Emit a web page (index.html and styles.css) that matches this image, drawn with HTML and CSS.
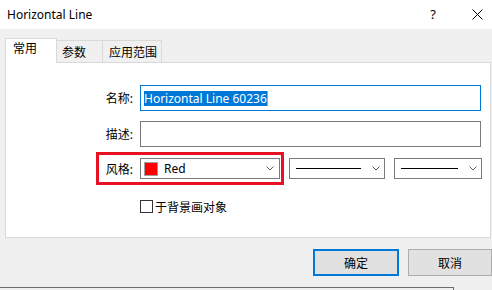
FILE: index.html
```html
<!DOCTYPE html>
<html>
<head>
  <meta charset="UTF-8">
  <title>Horizontal Line</title>
  <link rel="stylesheet" href="styles.css">
</head>
<body>
  <div class="dialog">
    <div class="titlebar">
      <span class="title">Horizontal Line</span>
      <span class="help">?</span>
      <svg class="close" width="11" height="11" viewBox="0 0 11 11">
        <path d="M0.5 0.5 L10.5 10.5 M10.5 0.5 L0.5 10.5" stroke="#000" stroke-width="1" fill="none"/>
      </svg>
    </div>

    <div class="tabs">
      <div class="tab active">常用</div>
      <div class="tab tab-params">参数</div>
      <div class="tab tab-scope">应用范围</div>
    </div>

    <div class="panel">
      <div class="row row-name">
        <label class="label">名称:</label>
        <div class="input focused"><span class="selected">Horizontal Line 60236</span></div>
      </div>
      <div class="row row-desc">
        <label class="label">描述:</label>
        <div class="input"></div>
      </div>
      <div class="row row-style">
        <div class="mark"></div>
        <label class="label">风格:</label>
        <div class="combo combo-color">
          <span class="swatch"></span>
          <span class="combo-text">Red</span>
          <svg class="chevron" width="8" height="5" viewBox="0 0 8 5"><path d="M0.5 0.5 L4 4 L7.5 0.5" stroke="#606060" fill="none"/></svg>
        </div>
        <div class="combo combo-line combo-line1">
          <span class="line"></span>
          <svg class="chevron" width="8" height="5" viewBox="0 0 8 5"><path d="M0.5 0.5 L4 4 L7.5 0.5" stroke="#606060" fill="none"/></svg>
        </div>
        <div class="combo combo-line combo-line2">
          <span class="line"></span>
          <svg class="chevron" width="8" height="5" viewBox="0 0 8 5"><path d="M0.5 0.5 L4 4 L7.5 0.5" stroke="#606060" fill="none"/></svg>
        </div>
      </div>
      <div class="row row-check">
        <span class="checkbox"></span>
        <span class="check-text">于背景画对象</span>
      </div>
    </div>

    <div class="buttons">
      <button class="btn btn-default">确定</button>
      <button class="btn btn-cancel">取消</button>
    </div>
    <div class="edge"></div>
  </div>
</body>
</html>
```

FILE: styles.css
```css
body {
  margin: 0;
  width: 492px;
  height: 290px;
  overflow: hidden;
  background-color: #f0f0f0;
  font-family: "Noto Sans", "Noto Sans CJK SC", sans-serif;
  font-size: 12px;
  color: #000;
}
.dialog {
  width: 492px;
  height: 290px;
}
.titlebar {
  height: 29px;
  background-color: #fff;
  display: flex;
  align-items: center;
}
.title {
  padding-left: 7px;
  margin-top: -1px;
}
.help {
  margin-left: auto;
  margin-right: 36px;
  font-size: 13px;
  margin-top: -1px;
}
.close {
  margin-right: 9px;
  margin-top: -1px;
}
.tabs {
  display: flex;
  align-items: flex-end;
  margin-top: 9px;
  padding-left: 5px;
  height: 24px;
  position: relative;
  z-index: 1;
}
.tab {
  box-sizing: border-box;
  height: 22px;
  border: 1px solid #d9d9d9;
  border-bottom: none;
  border-left: none;
  background-color: #f0f0f0;
  line-height: 22px;
  padding-top: 1px;
}
.tab.active {
  height: 25px;
  width: 52px;
  margin-bottom: -1px;
  border-left: 1px solid #d9d9d9;
  background-color: #fff;
  padding-left: 7px;
  line-height: 20px;
  padding-top: 0;
}
.tab-params {
  width: 46px;
  padding-left: 5px;
}
.tab-scope {
  width: 59px;
  padding-left: 6px;
}
.panel {
  box-sizing: border-box;
  height: 176px;
  margin-left: 5px;
  width: 486px;
  background-color: #fff;
  border: 1px solid #d9d9d9;
  padding: 22px 9px 0 0;
}
.row {
  display: flex;
  align-items: center;
}
.label {
  width: 127px;
  text-align: right;
  margin-right: 7px;
  flex-shrink: 0;
}
.row-name {
  height: 26px;
  margin-bottom: 10px;
}
.row-desc {
  height: 26px;
  margin-bottom: 11px;
}
.input {
  box-sizing: border-box;
  height: 26px;
  width: 341px;
  border: 1px solid #7a7a7a;
  display: flex;
  align-items: center;
  padding-left: 3px;
}
.input.focused {
  border-color: #0078d7;
}
.selected {
  background-color: #0078d7;
  color: #fff;
  line-height: 15px;
  height: 15px;
  border-right: 1px solid #f7931e;
}
.row-style {
  height: 21px;
  position: relative;
}
.mark {
  position: absolute;
  left: 90px;
  top: -6px;
  width: 188px;
  height: 33px;
  box-sizing: border-box;
  border: 3px solid #e81123;
}
.combo {
  box-sizing: border-box;
  height: 21px;
  border: 1px solid #7a7a7a;
  display: flex;
  align-items: center;
  flex-shrink: 0;
}
.combo-color {
  width: 140px;
  padding-left: 3px;
  padding-right: 5px;
}
.swatch {
  box-sizing: border-box;
  width: 14px;
  height: 14px;
  background-color: #ff0000;
  border: 1px solid #a0a0a0;
}
.combo-text {
  margin-left: 6px;
}
.chevron {
  margin-left: auto;
}
.combo-line {
  margin-left: 9px;
  padding-left: 6px;
  padding-right: 4px;
}
.combo-line1 {
  width: 96px;
}
.combo-line2 {
  width: 88px;
}
.line {
  flex: 1;
  height: 1px;
  background-color: #000;
  margin-right: 11px;
}
.row-check {
  margin-top: 21px;
  padding-left: 134px;
  height: 13px;
}
.checkbox {
  box-sizing: border-box;
  width: 13px;
  height: 13px;
  border: 1px solid #333;
  background-color: #fff;
}
.check-text {
  margin-left: 2px;
}
.buttons {
  height: 49px;
  box-sizing: border-box;
  padding-top: 11px;
  display: flex;
  justify-content: flex-end;
  gap: 9px;
}
.btn {
  box-sizing: border-box;
  height: 27px;
  font-family: "Noto Sans", "Noto Sans CJK SC", sans-serif;
  font-size: 12px;
  color: #000;
  background-color: #e1e1e1;
  border: 1px solid #adadad;
  padding: 0;
  margin: 0;
}
.btn-default {
  width: 86px;
  border: 2px solid #0078d7;
}
.btn-cancel {
  width: 84px;
}
.edge {
  box-sizing: border-box;
  width: 454px;
  height: 3px;
  border-top: 1px solid #6d6d6d;
  border-right: 1px solid #6d6d6d;
}
```
